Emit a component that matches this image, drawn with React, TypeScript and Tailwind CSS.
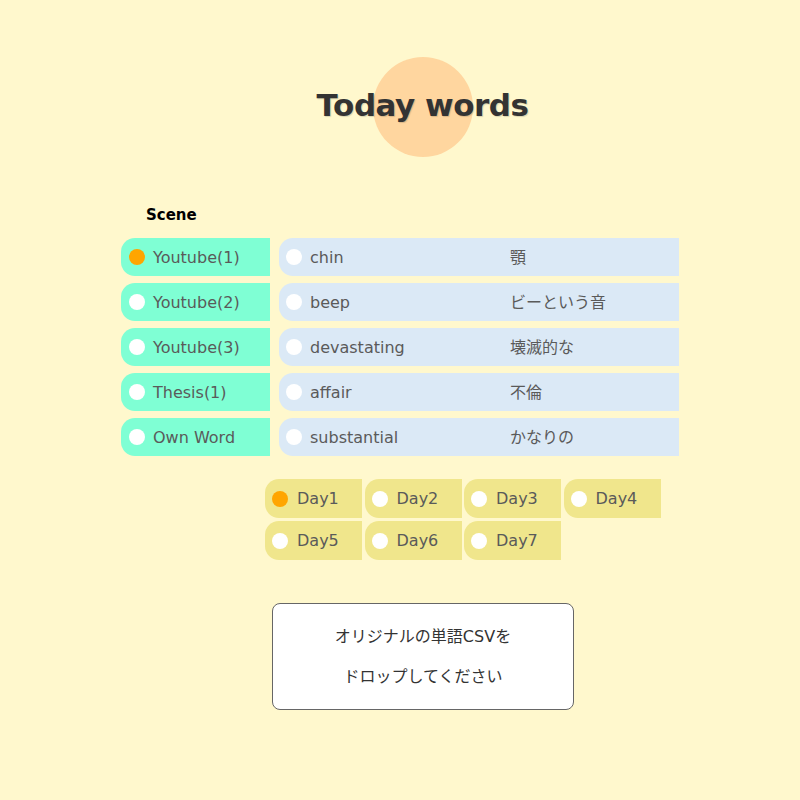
import React from "react";

const scenes = ["Youtube(1)", "Youtube(2)", "Youtube(3)", "Thesis(1)", "Own Word"];
const words: [string, string][] = [
  ["chin", "顎"],
  ["beep", "ビーという音"],
  ["devastating", "壊滅的な"],
  ["affair", "不倫"],
  ["substantial", "かなりの"],
];
const days = ["Day1", "Day2", "Day3", "Day4", "Day5", "Day6", "Day7"];

function Radio({ on }: { on?: boolean }) {
  return (
    <span
      className={`inline-block w-[16px] h-[16px] rounded-full shrink-0 ${on ? "bg-[#ffa500]" : "bg-white"}`}
    />
  );
}

export default function App() {
  return (
    <div
      className="w-[800px] h-[800px] bg-[#fff8cd] text-[#5a5a5a] overflow-hidden"
      style={{ fontFamily: '"DejaVu Sans", "Noto Sans CJK JP", sans-serif' }}
    >
      <div className="pt-[57px] flex justify-center pl-[45px]">
        <div className="relative w-[100px] h-[100px] rounded-full bg-[#ffd69f] flex items-center justify-center pb-[4px]">
          <h1 className="absolute whitespace-nowrap text-[31px] font-bold text-[#333] [text-shadow:1px_1px_1px_rgba(0,0,0,0.15)] tracking-[-0.5px]">
            Today words
          </h1>
        </div>
      </div>

      <div className="ml-[146px] mt-[49px] text-[15px] font-bold text-black leading-[18px]">Scene</div>

      <div className="ml-[121px] mt-[14px] flex gap-[9px] text-[16px] leading-[20px]">
        <div className="flex flex-col gap-[7px] w-[149px]">
          {scenes.map((s, i) => (
            <div key={s} className="h-[38px] bg-[#7fffd4] rounded-l-[14px] flex items-center pl-[8px] gap-[8px]">
              <Radio on={i === 0} />
              <span className="pt-[2px]">{s}</span>
            </div>
          ))}
        </div>
        <div className="flex flex-col gap-[7px] w-[400px]">
          {words.map(([en, ja]) => (
            <div key={en} className="h-[38px] bg-[#dbe9f6] rounded-l-[14px] flex items-center pl-[7px]">
              <Radio />
              <span className="ml-[8px] w-[200px] pt-[2px]">{en}</span>
              <span className="pt-[2px]">{ja}</span>
            </div>
          ))}
        </div>
      </div>

      <div className="ml-[265px] mt-[23px] grid grid-cols-[repeat(4,97px)] gap-x-[2.5px] gap-y-[3px] text-[16px] leading-[20px]">
        {days.map((d, i) => (
          <div key={d} className="h-[39px] bg-[#f0e68c] rounded-l-[14px] flex items-center pl-[7px] gap-[9px]">
            <Radio on={i === 0} />
            <span className="pt-[1px]">{d}</span>
          </div>
        ))}
      </div>

      <div className="ml-[272px] mt-[43px] w-[302px] h-[107px] bg-white border border-[#666] rounded-[8px] flex flex-col items-center justify-center gap-[19px] text-[16px] text-[#333] leading-[21px]">
        <div>オリジナルの単語CSVを</div>
        <div>ドロップしてください</div>
      </div>
    </div>
  );
}
